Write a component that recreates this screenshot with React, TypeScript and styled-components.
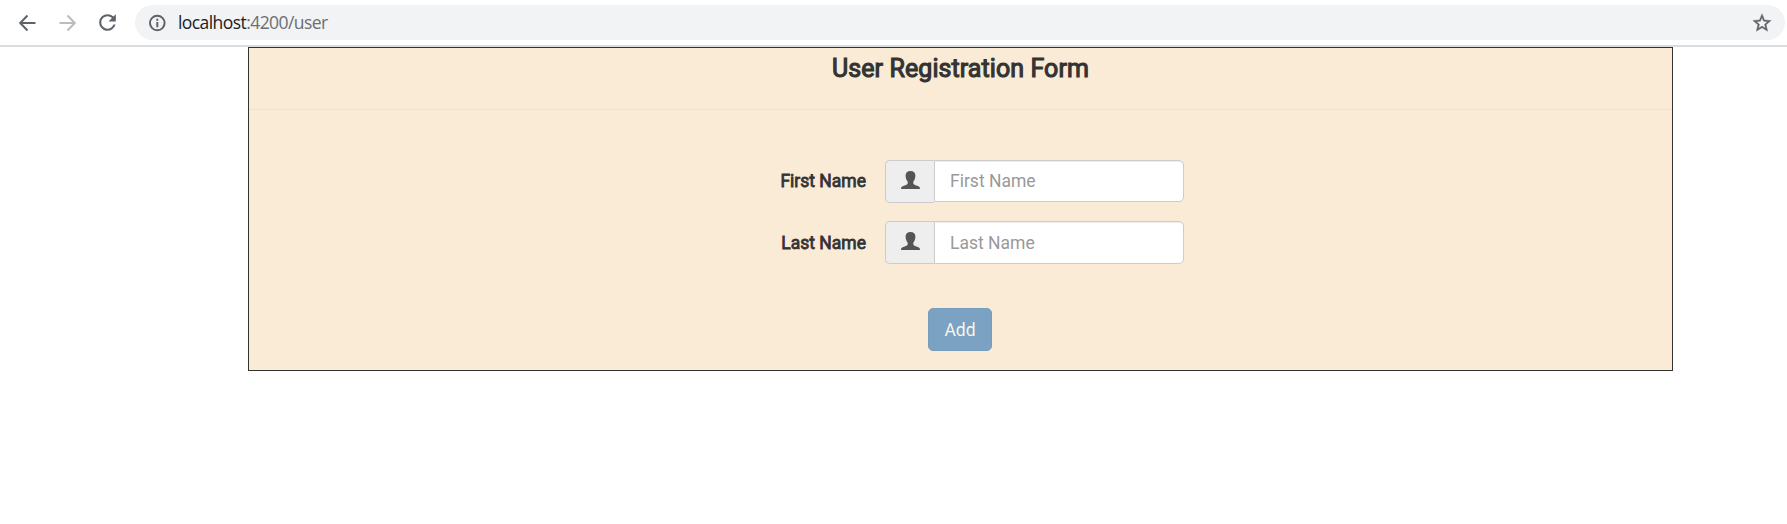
import React from 'react';
import styled, { createGlobalStyle } from 'styled-components';

const GlobalStyle = createGlobalStyle`
  *, *::before, *::after { box-sizing: border-box; }
  body {
    margin: 0;
    background: #fff;
    color: #333;
    font: 17.5px/25px Roboto, sans-serif;
  }
`;

const Toolbar = styled.header`
  display: flex;
  align-items: center;
  height: 47px;
  padding: 0 2px 0 11px;
  border-bottom: 2px solid #dadce0;
`;

const NavButton = styled.button<{ $muted?: boolean }>`
  display: flex;
  align-items: center;
  justify-content: center;
  width: 32px;
  height: 32px;
  margin-right: 8px;
  padding: 0;
  border: 0;
  background: none;
  color: ${(p) => (p.$muted ? '#babcbe' : '#5f6368')};
`;

const AddressBar = styled.div`
  display: flex;
  flex: 1;
  align-items: center;
  height: 35px;
  margin-left: 4px;
  padding: 0 12px 0 12px;
  border-radius: 18px;
  background: #f1f3f4;
  color: #5f6368;
`;

const Url = styled.span`
  flex: 1;
  margin-left: 11px;
  padding-bottom: 2px;
  color: #6b6f73;
  font: 17.5px/24px 'Open Sans', sans-serif;
  letter-spacing: -0.57px;
`;

const Host = styled.span`
  color: #202124;
`;

const Card = styled.main`
  width: 1425px;
  height: 324px;
  margin-left: 248px;
  border: 1px solid #333;
  background: #faebd7;
`;

const Title = styled.h1`
  margin: 0;
  padding-top: 6px;
  font-size: 25px;
  font-weight: 400;
  line-height: 30px;
  letter-spacing: 0.08px;
  -webkit-text-stroke: 1.1px #333;
  text-align: center;
`;

const Divider = styled.hr`
  height: 1px;
  margin: 25px 0 50px;
  border: 0;
  background: #e5e3e3;
`;

const Field = styled.div<{ $height: number }>`
  display: flex;
  align-items: flex-start;
  height: 43px;
  margin-bottom: 18px;

  input {
    height: ${(p) => p.$height}px;
  }

  label {
    padding-top: ${(p) => p.$height - 33}px;
  }
`;

const Label = styled.label`
  width: 617px;
  margin-right: 19px;
  -webkit-text-stroke: 0.8px #333;
  text-align: right;
`;

const Addon = styled.span`
  display: flex;
  align-items: center;
  justify-content: center;
  width: 49px;
  height: 43px;
  padding-bottom: 3px;
  border: 1px solid #ccc;
  border-right: 0;
  border-radius: 5px 0 0 5px;
  background: #eee;
  color: #555;
`;

const Input = styled.input`
  width: 250px;
  padding: 0 15px;
  border: 1px solid #ccc;
  border-radius: 0 5px 5px 0;
  outline: 0;
  background: #fff;
  box-shadow: inset 0 1px 1px rgba(0, 0, 0, 0.075);
  color: #555;
  font: 17.5px/25px Roboto, sans-serif;

  &::placeholder {
    color: #999;
    opacity: 1;
  }
`;

const AddButton = styled.button`
  display: block;
  width: 64px;
  height: 43px;
  margin: 44px auto 0 679px;
  padding: 1px 0 0;
  border: 1px solid #759dbd;
  border-radius: 5px;
  background: #7ba2c3;
  color: #f7f4f0;
  font: 17.5px/25px Roboto, sans-serif;
`;

const PersonIcon = () => (
  <svg width="20" height="20" viewBox="0 0 20 20" fill="currentColor">
    <path d="M10.500 1C7.300 1 5.600 2.900 5.600 5.600c0 2.700.9 4.700 2.100 6.100v1.600c0 .7-.4 1.100-1.200 1.400L2.700 16.300C1.400 16.900 1 17.500 1 19h19c0-1.500-.4-2.100-1.700-2.700L14.500 14.700c-.8-.3-1.200-.7-1.200-1.400v-1.600c1.200-1.400 2.100-3.400 2.100-6.100C15.400 2.900 13.700 1 10.500 1z" />
  </svg>
);

const fields = [
  { id: 'firstName', label: 'First Name', height: 42 },
  { id: 'lastName', label: 'Last Name', height: 43 },
];

export default function App() {
  return (
    <>
      <GlobalStyle />
      <Toolbar>
        <NavButton aria-label="Back">
          <svg width="24" height="24" viewBox="0 0 24 24" fill="none" stroke="currentColor" strokeWidth="2">
            <path d="M20.500 12H5.500M12.500 4.500 5.200 12l7.300 7.500" />
          </svg>
        </NavButton>
        <NavButton aria-label="Forward" $muted>
          <svg width="24" height="24" viewBox="0 0 24 24" fill="none" stroke="currentColor" strokeWidth="2">
            <path d="M4.500 12h15M12.500 4.500l7.300 7.500-7.300 7.500" />
          </svg>
        </NavButton>
        <NavButton aria-label="Reload">
          <svg width="25" height="25" viewBox="0 0 24 24" fill="currentColor">
            <path d="M17.650 6.350A7.960 7.960 0 0 0 12 4a8 8 0 1 0 7.730 10h-2.080A6 6 0 1 1 12 6c1.660 0 3.140.69 4.220 1.780L13 11h7V4z" />
          </svg>
        </NavButton>
        <AddressBar>
          <svg width="20" height="20" viewBox="0 0 20 20" fill="none" stroke="currentColor" strokeWidth="2">
            <circle cx="10.300" cy="10" r="7.300" />
            <path d="M10.300 5.800v2M10.300 9v5.200" />
          </svg>
          <Url><Host>localhost</Host>:4200/user</Url>
          <svg width="22" height="22" viewBox="0 0 24 24" fill="currentColor" stroke="currentColor" strokeWidth=".4">
            <path d="m22 9.240-7.190-.62L12 2 9.190 8.630 2 9.240l5.460 4.730L5.820 21 12 17.270 18.180 21l-1.630-7.030zM12 15.400l-3.760 2.270 1-4.280-3.320-2.880 4.380-.38L12 6.100l1.710 4.040 4.380.38-3.320 2.880 1 4.280z" />
          </svg>
        </AddressBar>
      </Toolbar>
      <Card>
        <Title>User Registration Form</Title>
        <Divider />
        {fields.map((f) => (
          <Field key={f.id} $height={f.height}>
            <Label htmlFor={f.id}>{f.label}</Label>
            <Addon><PersonIcon /></Addon>
            <Input id={f.id} placeholder={f.label} />
          </Field>
        ))}
        <AddButton>Add</AddButton>
      </Card>
    </>
  );
}
